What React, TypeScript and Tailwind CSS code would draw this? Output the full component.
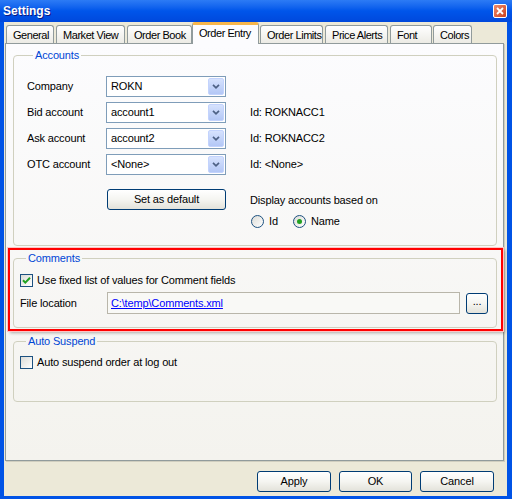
import React from "react";

const tabs = [
  { label: "General", cls: "ml-[2px] w-[48px]" },
  { label: "Market View", cls: "ml-[2px] w-[69px]" },
  { label: "Order Book", cls: "ml-[2px] w-[65px]" },
  { label: "Order Entry", cls: "ml-0 w-[67px]", active: true },
  { label: "Order Limits", cls: "ml-[1px] w-[63px]" },
  { label: "Price Alerts", cls: "ml-[2px] w-[63px]" },
  { label: "Font", cls: "ml-[2px] w-[42px]" },
  { label: "Colors", cls: "ml-[1px] w-[39px]" },
];

const accounts = [
  { label: "Company", value: "ROKN", id: "" },
  { label: "Bid account", value: "account1", id: "Id: ROKNACC1" },
  { label: "Ask account", value: "account2", id: "Id: ROKNACC2" },
  { label: "OTC account", value: "<None>", id: "Id: <None>" },
];

function Combo({ value }: { value: string }) {
  return (
    <div className="flex h-[21px] w-[120px] items-center border border-[#7F9DB9] bg-white pl-[4px] pr-[1px]">
      <span className="flex-1 truncate">{value}</span>
      <span className="flex h-[17px] w-[16px] items-center justify-center rounded-[2px] border border-[#C3D3FD] bg-gradient-to-b from-[#D6E2FD] to-[#B3C7F6]">
        <svg width="8" height="5" viewBox="0 0 8 5">
          <path d="M1 0.8l3 3 3-3" stroke="#4D6185" strokeWidth="1.7" fill="none" />
        </svg>
      </span>
    </div>
  );
}

function XpButton({ label, cls }: { label: string; cls: string }) {
  return (
    <button className={`flex h-[21px] items-center justify-center rounded-[3px] border border-[#003C74] bg-gradient-to-b from-white via-[#F5F5F1] to-[#E3E2DA] text-black ${cls}`}>
      {label}
    </button>
  );
}

function Check({ checked }: { checked: boolean }) {
  return (
    <span className="flex h-[13px] w-[13px] items-center justify-center border border-[#1C5180] bg-gradient-to-br from-[#DCDCD7] to-white">
      {checked && (
        <svg width="9" height="9" viewBox="0 0 9 9">
          <path d="M1 4.2l2.3 2.4L8 1.8" stroke="#21A121" strokeWidth="2" fill="none" />
        </svg>
      )}
    </span>
  );
}

function Radio({ checked }: { checked: boolean }) {
  return (
    <span className="flex h-[13px] w-[13px] items-center justify-center rounded-full border border-[#1C5180] bg-gradient-to-br from-[#DCDCD7] to-white">
      {checked && <span className="h-[5px] w-[5px] rounded-full bg-[#21A121]" />}
    </span>
  );
}

function Legend({ text }: { text: string }) {
  return <legend className="ml-[6px] px-[2px] leading-[13px] text-[#0046D5]">{text}</legend>;
}

export default function App() {
  return (
    <div className="flex h-[499px] w-[512px] flex-col bg-[#0053E6] font-['Liberation_Sans',Arial,sans-serif] text-[11px] leading-[13px] tracking-[-0.15px] text-black">
      {/* title bar */}
      <div className="flex h-[22px] items-center bg-gradient-to-b from-[#2C7BF5] via-[#0055EA] to-[#0048DC] pl-[3px] pr-[5px]">
        <span className="flex-1 text-[12px] font-bold tracking-normal text-white [text-shadow:1px_1px_0_#0A1883]">Settings</span>
        <span className="flex h-[14px] w-[14px] items-center justify-center rounded-[2px] border border-white bg-gradient-to-br from-[#F08A6A] to-[#C9401C]">
          <svg width="8" height="8" viewBox="0 0 8 8">
            <path d="M1 1l6 6M7 1L1 7" stroke="white" strokeWidth="1.8" />
          </svg>
        </span>
      </div>

      {/* window body */}
      <div className="flex flex-1 pb-[3px] pl-[4px] pr-[5px]">
        <div className="flex w-[503px] flex-col bg-[#ECE9D8]">
          {/* tabs */}
          <div className="flex h-[21px] items-end tracking-[-0.45px]">
            {tabs.map((t) =>
              t.active ? (
                <div
                  key={t.label}
                  className={`relative z-10 -mb-[1px] h-[22px] whitespace-nowrap rounded-t-[3px] border-x border-t-[3px] border-x-[#919B9C] border-t-[#F7B64B] bg-[#FCFCFE] pl-[6px] pt-[2px] ${t.cls}`}
                >
                  {t.label}
                </div>
              ) : (
                <div
                  key={t.label}
                  className={`h-[18px] whitespace-nowrap rounded-t-[3px] border-x border-t border-[#919B9C] bg-gradient-to-b from-white to-[#ECEBE5] pl-[6px] pt-[3px] ${t.cls}`}
                >
                  {t.label}
                </div>
              )
            )}
          </div>

          {/* tab page */}
          <div className="ml-[1px] flex h-[418px] w-[499px] flex-col border border-[#919B9C] bg-gradient-to-b from-[#FCFCFE] to-[#F4F3EE] pl-[7px] pr-[6px] pt-[5px] shadow-[1px_1px_0_#D0CEBF]">
            {/* Accounts */}
            <fieldset className="rounded-[4px] border border-[#D0D0BF] pb-[17px] pl-[13px]">
              <Legend text="Accounts" />
              <div className="mt-[14px] flex flex-col gap-[5px]">
                {accounts.map((a) => (
                  <div key={a.label} className="flex h-[21px] items-center">
                    <span className="w-[79px]">{a.label}</span>
                    <Combo value={a.value} />
                    <span className="ml-[24px]">{a.id}</span>
                  </div>
                ))}
              </div>
              <div className="mt-[14px] flex">
                <span className="w-[80px]" />
                <XpButton label="Set as default" cls="w-[119px]" />
                <div className="ml-[24px] mt-[5px] flex flex-col">
                  <span>Display accounts based on</span>
                  <div className="mt-[8px] flex items-center">
                    <span className="ml-[1px]"><Radio checked={false} /></span>
                    <span className="ml-[5px]">Id</span>
                    <span className="ml-[15px]"><Radio checked={true} /></span>
                    <span className="ml-[5px]">Name</span>
                  </div>
                </div>
              </div>
            </fieldset>

            {/* Comments, highlighted */}
            <div className="-ml-[5px] -mr-[6px] mt-[2px] border-2 border-[#FF0000] pb-[1px] pl-[3px] pr-[4px] pt-[2px] shadow-[0_0_0_1px_#FFC4C4,2px_2px_3px_rgba(0,0,0,0.3)]">
              <fieldset className="rounded-[4px] border border-[#D0D0BF] pb-[13px] pl-[6px]">
                <Legend text="Comments" />
                <div className="mt-[9px] flex h-[13px] items-center">
                  <Check checked={true} />
                  <span className="ml-[4px]">Use fixed list of values for Comment fields</span>
                </div>
                <div className="mt-[5px] flex h-[22px] items-center">
                  <span className="w-[87px]">File location</span>
                  <div className="flex h-[22px] w-[353px] items-center border border-[#B9B6AA] bg-[#F9F9F6] pl-[3px]">
                    <span className="text-[#0000FF] underline">C:\temp\Comments.xml</span>
                  </div>
                  <XpButton label="..." cls="ml-[6px] w-[22px] pb-[3px]" />
                </div>
              </fieldset>
            </div>

            {/* Auto Suspend */}
            <fieldset className="mt-[4px] rounded-[4px] border border-[#D0D0BF] pb-[32px] pl-[6px]">
              <Legend text="Auto Suspend" />
              <div className="mt-[8px] flex h-[13px] items-center">
                <Check checked={false} />
                <span className="ml-[4px]">Auto suspend order at log out</span>
              </div>
            </fieldset>
          </div>

          {/* dialog buttons */}
          <div className="mt-[10px] flex justify-end gap-[8px] pr-[13px]">
            <XpButton label="Apply" cls="w-[74px]" />
            <XpButton label="OK" cls="w-[73px]" />
            <XpButton label="Cancel" cls="w-[74px]" />
          </div>
        </div>
      </div>
    </div>
  );
}
